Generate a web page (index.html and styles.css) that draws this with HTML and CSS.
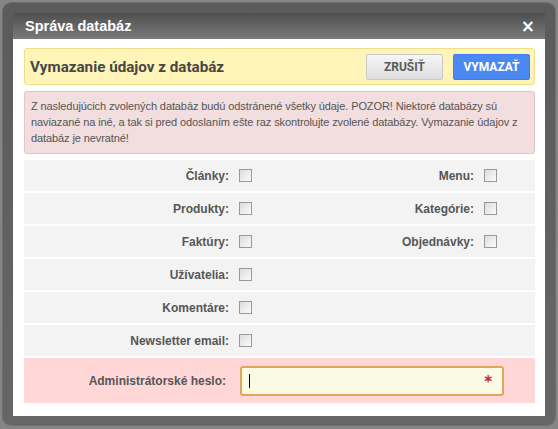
FILE: index.html
```html
<!DOCTYPE html>
<html lang="sk">
<head>
<meta charset="utf-8">
<title>Správa databáz</title>
<link rel="stylesheet" href="styles.css">
</head>
<body>
<div class="frame">
  <div class="panel">
    <div class="titlebar">
      <span class="title">Správa databáz</span>
      <span class="close">×</span>
    </div>
    <div class="content">
      <div class="header">
        <h1 class="heading">Vymazanie údajov z databáz</h1>
        <div class="actions">
          <button class="btn btn-cancel">Zrušiť</button>
          <button class="btn btn-delete">Vymazať</button>
        </div>
      </div>
      <div class="alert">Z nasledujúcich zvolených databáz budú odstránené všetky údaje. POZOR! Niektoré databázy sú naviazané na iné, a tak si pred odoslaním ešte raz skontrolujte zvolené databázy. Vymazanie údajov z databáz je nevratné!</div>
      <div class="form">
        <div class="row">
          <div class="field"><span class="label">Články:</span><span class="check"></span></div>
          <div class="field"><span class="label">Menu:</span><span class="check"></span></div>
        </div>
        <div class="row">
          <div class="field"><span class="label">Produkty:</span><span class="check"></span></div>
          <div class="field"><span class="label">Kategórie:</span><span class="check"></span></div>
        </div>
        <div class="row">
          <div class="field"><span class="label">Faktúry:</span><span class="check"></span></div>
          <div class="field"><span class="label">Objednávky:</span><span class="check"></span></div>
        </div>
        <div class="row">
          <div class="field"><span class="label">Užívatelia:</span><span class="check"></span></div>
        </div>
        <div class="row">
          <div class="field"><span class="label">Komentáre:</span><span class="check"></span></div>
        </div>
        <div class="row">
          <div class="field"><span class="label">Newsletter email:</span><span class="check"></span></div>
        </div>
        <div class="row row-password">
          <span class="label">Administrátorské heslo:</span>
          <div class="input"><span class="caret"></span><span class="required">*</span></div>
        </div>
      </div>
    </div>
  </div>
</div>
</body>
</html>
```

FILE: styles.css
```css
* { box-sizing: border-box; }
html, body {
  margin: 0;
  padding: 0;
  background: #858585;
  width: 558px;
  height: 429px;
  overflow: hidden;
}
.frame {
  margin: 3px 0 0 3px;
  width: 552px;
  height: 422px;
  padding: 10px;
  background: linear-gradient(#5b5b5b, #666666);
  border-radius: 8px;
  box-shadow: 0 0 0 1px #6e6e6e;
}
.panel {
  background: #ffffff;
  height: 403px;
}
.titlebar {
  height: 26px;
  background: linear-gradient(#4f4f4f, #7a7a7a);
  display: flex;
  align-items: center;
  justify-content: space-between;
  padding: 0 10px 0 12px;
}
.title {
  font-family: "Liberation Sans", Arial, sans-serif;
  font-weight: bold;
  font-size: 14.5px;
  color: #ffffff;
}
.close {
  font-family: "DejaVu Sans", sans-serif;
  font-weight: bold;
  font-size: 17px;
  color: #ffffff;
  line-height: 1;
}
.content {
  padding: 9px 10px 0 11px;
}
.header {
  height: 37px;
  background: #fff5b8;
  border: 1px solid #efde8d;
  border-radius: 3px;
  display: flex;
  align-items: center;
  justify-content: space-between;
  padding: 0 4px 0 5px;
}
.heading {
  margin: 0;
  font-family: Roboto, "Liberation Sans", sans-serif;
  font-weight: bold;
  font-size: 15.2px;
  color: #474747;
}
.actions {
  display: flex;
  gap: 10px;
}
.btn {
  width: 77px;
  height: 26px;
  border-radius: 2px;
  font-family: Roboto, "Liberation Sans", sans-serif;
  font-weight: bold;
  font-size: 12px;
  text-transform: uppercase;
  padding: 0;
}
.btn-cancel {
  background: linear-gradient(#f6f6f6, #dedede);
  border: 1px solid #c9c9c9;
  color: #5a5a5a;
}
.btn-delete {
  background: #4a89f3;
  border: 1px solid #3f7de6;
  color: #ffffff;
}
.alert {
  margin-top: 6px;
  background: #f2dede;
  border: 1px solid #e6c3c5;
  border-radius: 3px;
  padding: 6px 10px 7px 6px;
  font-family: "Liberation Sans", Tahoma, sans-serif;
  font-size: 11px;
  letter-spacing: -0.1px;
  line-height: 16px;
  color: #555555;
}
.form {
  margin-top: 6px;
  display: flex;
  flex-direction: column;
  gap: 2px;
}
.row {
  height: 31px;
  background: #f3f3f3;
  display: flex;
  align-items: center;
}
.field {
  width: 245px;
  display: flex;
  align-items: center;
}
.label {
  width: 205px;
  text-align: right;
  font-family: "Liberation Sans", Tahoma, sans-serif;
  font-weight: bold;
  font-size: 12px;
  color: #565656;
}
.check {
  margin-left: 10px;
  width: 13px;
  height: 13px;
  border: 1px solid #999999;
  background: linear-gradient(135deg, #dcdcdc, #fbfbfb);
}
.row-password {
  height: 45px;
  background: #ffd7d7;
}
.row-password .label {
  width: 202px;
}
.input {
  margin-left: 14px;
  width: 264px;
  height: 30px;
  border: 2px solid #e3a559;
  border-radius: 3px;
  background: #fbfae4;
  display: flex;
  align-items: center;
  justify-content: space-between;
  padding: 0 10px 0 7px;
}
.caret {
  width: 1px;
  height: 14px;
  background: #000000;
}
.required {
  font-family: "DejaVu Sans", sans-serif;
  font-weight: bold;
  font-size: 15px;
  color: #c8232b;
  line-height: 1;
  padding-top: 4px;
}
```
